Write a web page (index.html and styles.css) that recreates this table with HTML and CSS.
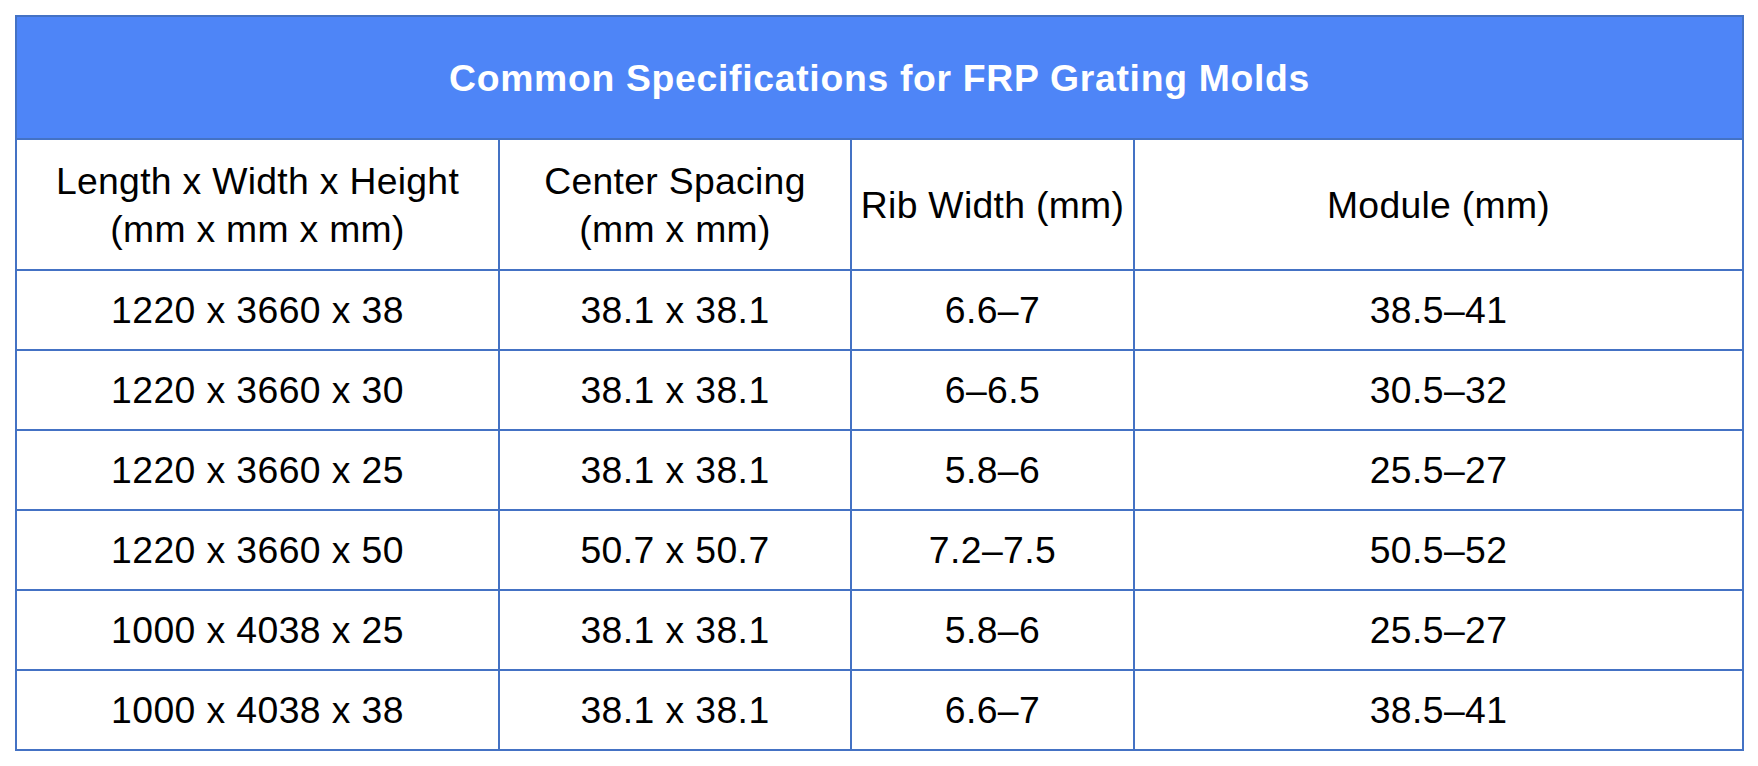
FILE: index.html
```html
<!DOCTYPE html>
<html lang="en">
<head>
<meta charset="utf-8">
<title>Common Specifications for FRP Grating Molds</title>
<link rel="stylesheet" href="styles.css">
</head>
<body>
<table class="spec">
  <colgroup>
    <col class="c1"><col class="c2"><col class="c3"><col class="c4">
  </colgroup>
  <thead>
    <tr class="title-row"><th colspan="4" class="title">Common Specifications for FRP Grating Molds</th></tr>
    <tr class="head-row">
      <th>Length x Width x Height<br>(mm x mm x mm)</th>
      <th>Center Spacing<br>(mm x mm)</th>
      <th>Rib Width (mm)</th>
      <th>Module (mm)</th>
    </tr>
  </thead>
  <tbody>
    <tr><td>1220 x 3660 x 38</td><td>38.1 x 38.1</td><td>6.6–7</td><td>38.5–41</td></tr>
    <tr><td>1220 x 3660 x 30</td><td>38.1 x 38.1</td><td>6–6.5</td><td>30.5–32</td></tr>
    <tr><td>1220 x 3660 x 25</td><td>38.1 x 38.1</td><td>5.8–6</td><td>25.5–27</td></tr>
    <tr><td>1220 x 3660 x 50</td><td>50.7 x 50.7</td><td>7.2–7.5</td><td>50.5–52</td></tr>
    <tr><td>1000 x 4038 x 25</td><td>38.1 x 38.1</td><td>5.8–6</td><td>25.5–27</td></tr>
    <tr><td>1000 x 4038 x 38</td><td>38.1 x 38.1</td><td>6.6–7</td><td>38.5–41</td></tr>
  </tbody>
</table>
</body>
</html>
```

FILE: styles.css
```css
html, body {
  margin: 0;
  padding: 0;
  background: #ffffff;
}

body {
  padding: 15px 0 0 15px;
  font-family: "Liberation Sans", Arial, sans-serif;
  color: #000000;
}

.spec {
  border-collapse: collapse;
  table-layout: fixed;
  width: 1727px;
  font-size: 37.33px;
}

.c1 { width: 483px; }
.c2 { width: 352px; }
.c3 { width: 283px; }
.c4 { width: 609px; }

.spec th,
.spec td {
  border: 2px solid #4472c4;
  text-align: center;
  vertical-align: middle;
  padding: 0;
  font-weight: normal;
  letter-spacing: 0.3px;
}

.spec .title {
  background: #4e85f7;
  color: #ffffff;
  font-weight: bold;
  letter-spacing: 0.7px;
  line-height: 44px;
}

.title-row { height: 123px; }

.head-row { height: 131px; }
.head-row th { line-height: 48px; }

.spec tbody tr { height: 80px; }
.spec tbody td { line-height: 44px; letter-spacing: 0.4px; }
```
